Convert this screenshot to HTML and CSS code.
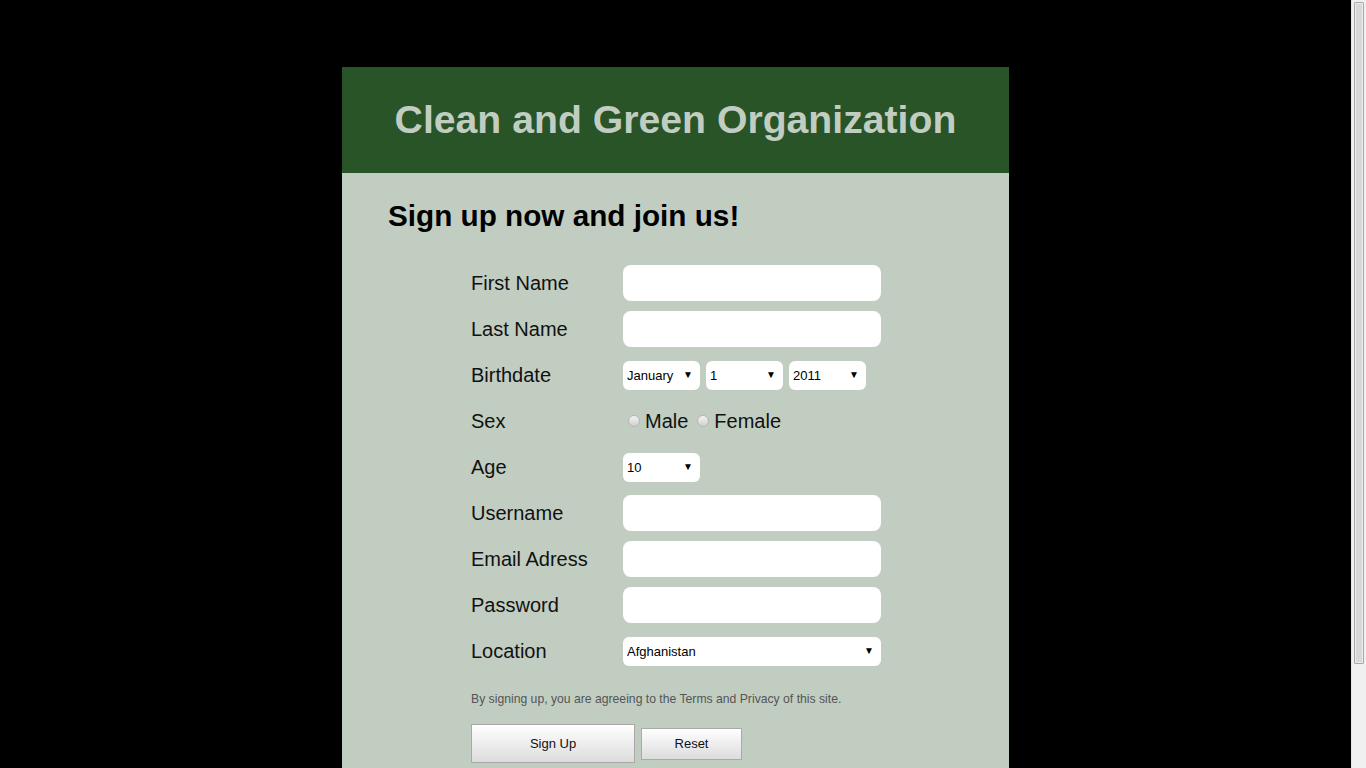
FILE: index.html
```html
<!DOCTYPE html>
<html lang="en">
<head>
    <meta charset="UTF-8">
    <title>Clean and Green Organization</title>
    <link rel="stylesheet" href="styles.css">
</head>
<body>
    <div id="wrapper">
        <div id="header">
            <h1>Clean and Green Organization</h1>
        </div>
        <div id="content">
            <h2>Sign up now and join us!</h2>
            <form class="signup">
                <label class="lbl">First Name</label>
                <div class="field"><input type="text" class="txt"></div>

                <label class="lbl">Last Name</label>
                <div class="field"><input type="text" class="txt"></div>

                <label class="lbl">Birthdate</label>
                <div class="field">
                    <span class="sel sel-small"><select><option>January</option></select></span>
                    <span class="sel sel-small"><select><option>1</option></select></span>
                    <span class="sel sel-small"><select><option>2011</option></select></span>
                </div>

                <label class="lbl">Sex</label>
                <div class="field radios">
                    <label class="radio"><input type="radio" name="sex"><span>Male</span></label>
                    <label class="radio"><input type="radio" name="sex"><span>Female</span></label>
                </div>

                <label class="lbl">Age</label>
                <div class="field">
                    <span class="sel sel-small"><select><option>10</option></select></span>
                </div>

                <label class="lbl">Username</label>
                <div class="field"><input type="text" class="txt"></div>

                <label class="lbl">Email Adress</label>
                <div class="field"><input type="text" class="txt"></div>

                <label class="lbl">Password</label>
                <div class="field"><input type="password" class="txt"></div>

                <label class="lbl">Location</label>
                <div class="field">
                    <span class="sel sel-wide"><select><option>Afghanistan</option></select></span>
                </div>
            </form>
            <p class="terms">By signing up, you are agreeing to the Terms and Privacy of this site.</p>
            <div class="buttons">
                <button type="button" class="btn btn-big">Sign Up</button>
                <button type="button" class="btn btn-small">Reset</button>
            </div>
        </div>
    </div>
    <!-- window scrollbar, drawn since the headless browser hides it -->
    <div class="scrollbar"><div class="thumb"></div></div>
</body>
</html>
```

FILE: styles.css
```css
html, body {
    overflow: hidden;
}
body {
    margin: 0;
    padding-right: 15px;
    background-color: #000;
    font-family: Arial, "Liberation Sans", sans-serif;
}
.scrollbar {
    position: fixed;
    top: 0;
    right: 0;
    width: 14px;
    height: 100vh;
    background-color: #f0f0f0;
    border-left: 1px solid #e4e4e4;
}
.thumb {
    margin: 2px 0 0 2px;
    width: 8px;
    height: 660px;
    background-color: #d8d8d8;
    border: 1px solid #a8a8a8;
    border-radius: 1px;
    box-shadow: inset 0 0 0 1px #ececec;
}
#wrapper {
    width: 667px;
    margin: 67px auto 0;
}
#header {
    background-color: #285428;
    height: 106px;
    display: flex;
    align-items: center;
    justify-content: center;
}
#header h1 {
    margin: 0;
    font-size: 39.2px;
    font-weight: bold;
    color: #c1cdc1;
}
#content {
    background-color: #c1cdc1;
    padding: 26px 46px 160px;
}
#content h2 {
    margin: 0 0 27px;
    font-size: 29.7px;
    font-weight: bold;
    color: #000;
}
.signup {
    display: grid;
    grid-template-columns: 152px 258px;
    grid-auto-rows: 46px;
    margin-left: 83px;
    align-items: center;
}
.lbl {
    font-size: 20px;
    color: #111;
}
.field {
    display: flex;
    align-items: center;
    gap: 6px;
}
.txt {
    width: 258px;
    height: 36px;
    box-sizing: border-box;
    border: none;
    border-radius: 8px;
    background-color: #fff;
    padding: 0 8px;
    font-size: 16px;
}
.sel {
    position: relative;
    display: inline-block;
}
.sel select {
    appearance: none;
    -webkit-appearance: none;
    border: none;
    border-radius: 6px;
    background-color: #fff;
    height: 29px;
    padding: 1px 4px 0;
    font-family: Arial, "Liberation Sans", sans-serif;
    font-size: 13px;
    color: #000;
    width: 100%;
}
.sel::after {
    content: "\25BC";
    position: absolute;
    right: 7px;
    top: 8px;
    font-size: 10px;
    color: #000;
    pointer-events: none;
}
.sel-small {
    width: 77px;
}
.sel-wide {
    width: 258px;
}
.radios {
    gap: 4px;
}
.radio {
    display: flex;
    align-items: center;
    font-size: 20px;
    color: #111;
}
.radio input {
    appearance: none;
    -webkit-appearance: none;
    width: 12px;
    height: 12px;
    margin: 0 5px 0 5px;
    border-radius: 50%;
    border: 1px solid #b5b5b5;
    background: linear-gradient(#f4f4f4, #d0d0d0);
    box-sizing: border-box;
}
.terms {
    margin: 18px 0 0 83px;
    font-size: 12.2px;
    color: #555;
}
.buttons {
    margin: 18px 0 0 83px;
    display: flex;
    align-items: center;
    gap: 6px;
}
.btn {
    font-family: Arial, "Liberation Sans", sans-serif;
    font-size: 13px;
    color: #111;
    border: 1px solid #a9a9a9;
    background: linear-gradient(#ffffff, #dcdcdc);
    padding: 0;
}
.btn-big {
    width: 164px;
    height: 39px;
}
.btn-small {
    width: 101px;
    height: 32px;
}
```
